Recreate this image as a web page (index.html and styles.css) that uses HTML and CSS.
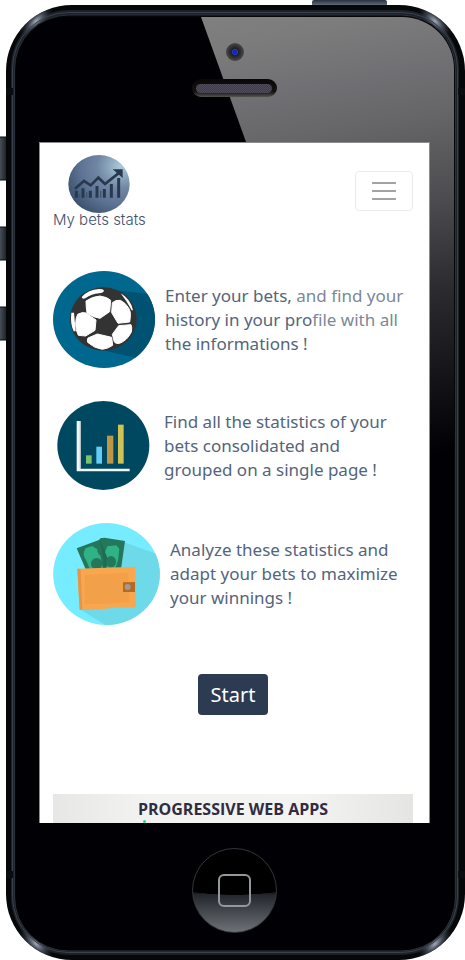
FILE: index.html
```html
<!DOCTYPE html>
<html lang="en">
<head>
<meta charset="utf-8">
<meta name="viewport" content="width=device-width, initial-scale=1">
<title>My bets stats</title>
<link rel="stylesheet" href="styles.css">
</head>
<body>
<div class="phone">
  <svg class="phone-shell" viewBox="0 0 465 960" preserveAspectRatio="none" aria-hidden="true">
    <defs>
      <linearGradient id="side" x1="0" x2="1" y1="0" y2="0"><stop offset="0" stop-color="#59616c"/><stop offset="1" stop-color="#14181e"/></linearGradient>
      <linearGradient id="power" x1="0" x2="0" y1="0" y2="1"><stop offset="0" stop-color="#28303b"/><stop offset=".5" stop-color="#5b6573"/><stop offset="1" stop-color="#10141a"/></linearGradient>
      <linearGradient id="glare" gradientUnits="userSpaceOnUse" x1="260" y1="0" x2="350" y2="470"><stop offset="0" stop-color="#808080"/><stop offset=".08" stop-color="#7c7c7c"/><stop offset=".2" stop-color="#707074"/><stop offset=".3" stop-color="#666668"/><stop offset=".48" stop-color="#4c4c50"/><stop offset=".66" stop-color="#2c2c30"/><stop offset=".88" stop-color="#101014"/><stop offset="1" stop-color="#010105"/></linearGradient>
      <radialGradient id="shine"><stop offset="0" stop-color="#a4acbb"/><stop offset=".4" stop-color="#596170" stop-opacity=".8"/><stop offset="1" stop-color="#20242c" stop-opacity="0"/></radialGradient>
      <radialGradient id="lens"><stop offset="0" stop-color="#1b2bd0"/><stop offset=".28" stop-color="#101a70"/><stop offset=".42" stop-color="#222226"/><stop offset="1" stop-color="#48484b"/></radialGradient>
      <linearGradient id="slot" x1="0" x2="0" y1="0" y2="1"><stop offset="0" stop-color="#080808"/><stop offset=".7" stop-color="#17130f"/><stop offset="1" stop-color="#56524f"/></linearGradient>
      <pattern id="mesh" width="2" height="2" patternUnits="userSpaceOnUse"><rect width="2" height="2" fill="#3d3b49"/><rect width="1" height="1" fill="#504e5c"/><rect x="1" y="1" width="1" height="1" fill="#504e5c"/></pattern>
      <clipPath id="glass"><rect x="16" y="17" width="438" height="933" rx="52"/></clipPath>
      <clipPath id="body"><rect x="6" y="5" width="459" height="955" rx="66"/></clipPath>
    </defs>
    <rect x="312" y="0" width="75" height="9" rx="2" fill="url(#power)"/>
    <g fill="url(#side)" stroke="#07090c">
      <rect x="-3" y="137" width="11" height="43" rx="2"/>
      <rect x="-3" y="227" width="11" height="33" rx="2"/>
      <rect x="-3" y="307" width="11" height="33" rx="2"/>
    </g>
    <rect x="6" y="5" width="459" height="955" rx="66" fill="#050708"/>
    <rect x="11" y="10" width="448" height="945" rx="58" fill="#1c2128"/>
    <g clip-path="url(#body)" fill="url(#shine)">
      <ellipse cx="36" cy="21" rx="22" ry="9" transform="rotate(-42 36 21)"/>
      <ellipse cx="435" cy="21" rx="22" ry="9" transform="rotate(42 435 21)"/>
      <ellipse cx="36" cy="944" rx="22" ry="9" transform="rotate(42 36 944)"/>
      <ellipse cx="435" cy="944" rx="22" ry="9" transform="rotate(-42 435 944)"/>
    </g>
    <rect x="12.500" y="12.500" width="445" height="940" rx="56" fill="none" stroke="#3b424d"/>
    <rect x="14.500" y="15" width="441" height="936" rx="54" fill="#050608" stroke="#2c323b"/>
    <rect x="16" y="17" width="438" height="933" rx="52" fill="#010105"/>
    <g clip-path="url(#glass)"><path d="M201 17H455V722Z" fill="url(#glare)"/></g>
    <path d="M6 88h7v7H6zM458 88h7v7h-7zM6 871h7v7H6zM458 871h7v7h-7z" fill="#0a0c10"/>
    <circle cx="235" cy="52" r="9" fill="url(#lens)"/>
    <circle cx="235" cy="52" r="2.500" fill="none" stroke="#2840e0"/>
    <rect x="192" y="79" width="85" height="18" rx="9" fill="url(#slot)"/>
    <rect x="196" y="84" width="76" height="9" rx="4.500" fill="url(#mesh)"/>
  </svg>

  <main class="screen">
    <header class="topbar">
      <a class="brand" href="#">
        <svg width="62" height="58" viewBox="84 43 186 174" aria-hidden="true">
          <defs><radialGradient id="orb" cx=".85" cy=".2" r=".95"><stop offset="0" stop-color="#a9cbd8"/><stop offset=".4" stop-color="#7186a3"/><stop offset=".7" stop-color="#5c7293"/><stop offset="1" stop-color="#3c526e"/></radialGradient></defs>
          <ellipse cx="177" cy="130" rx="92" ry="87" fill="url(#orb)"/>
          <path d="M105 144l27-23 20 13 23-23 20 19 43-34" fill="none" stroke="#28384f" stroke-width="8"/>
          <path d="M218 86h30v26z" fill="#28384f"/>
          <path d="M109 150v21M129 143v28M151 150v21M171 136v35M193 145v26M214 130v41M236 112v59" stroke="#28384f" stroke-width="9"/>
          <path d="M118 160v11M140 155v16M182 150v21" stroke="#40546f" stroke-width="4"/>
        </svg>
        <span class="brand-name">My bets stats</span>
      </a>
      <button class="toggler" type="button" aria-label="Toggle navigation">
        <svg width="26" height="20" viewBox="0 0 26 20" aria-hidden="true"><path d="M1 2h24M1 10h24M1 18h24" stroke="#a3a3a3" stroke-width="2"/></svg>
      </button>
    </header>

    <section class="features">
      <div class="feature">
        <svg width="102" height="97" viewBox="39 31 306 291" aria-hidden="true">
          <defs><clipPath id="c1"><ellipse cx="192" cy="176.500" rx="153" ry="145.500"/></clipPath></defs>
          <ellipse cx="192" cy="176.500" rx="153" ry="145.500" fill="#00678f"/>
          <path d="M215 88l135 14v192H300L195 270z" fill="#005273" clip-path="url(#c1)"/>
          <ellipse cx="190" cy="175" rx="100" ry="95" fill="#333"/>
          <g fill="#fff" stroke="#fff" stroke-width="3" stroke-linejoin="round">
            <path d="M138 121q18-13 42-15 22 3 32 13l-3 34-29 20q-19-2-39-16-3-18-3-36z"/>
            <path d="M217 126q10-9 24-7 24 13 30 36 1 15-2 29l-35 4-19-32z"/>
            <path d="M113 161q14-8 25-4l30 21-3 31-28 17-22-2q-8-16-8-33 0-19 6-30z"/>
            <path d="M236 195l37-3q4 9 1 22-12 25-35 34-12 2-16-4l-6-23z"/>
            <path d="M144 232l28-12 43 10 3 24q-14 10-31 12-24-3-44-21-2-7 1-13z"/>
          </g>
          <g fill="#fff">
            <path d="M125 109q20-22 52-24 14-1 15 6-2 5-15 7-22 2-41 15-9 4-11-4z"/>
            <path d="M94 156h8l5 56h-6q-11-23-7-56z"/>
            <path d="M242 98q30 17 37 51h-4q-16-30-33-51z"/>
          </g>
        </svg>
        <p class="feature-text">Enter your bets, <span class="soft">and find your</span> history in your pro<span class="soft">file with all</span> the informations !</p>
      </div>
      <div class="feature">
        <svg width="101" height="89" viewBox="39 32 303 267" aria-hidden="true">
          <ellipse cx="190" cy="165.500" rx="138" ry="133.500" fill="#00485f"/>
          <path d="M110 92h12v143h147v8H110z" fill="#f4f7f8"/>
          <path d="M119 92h3v143h-3z" fill="#b6c7cc"/>
          <path d="M138 195h17v25h-17z" fill="#78c46c"/>
          <path d="M169 169h17v51h-17z" fill="#65cdf5"/>
          <path d="M201 136h19v84h-19z" fill="#bf9645"/>
          <path d="M234 103h17v117h-17z" fill="#d1c254"/>
        </svg>
        <p class="feature-text">Find all the statistics of your bets consolidated and grouped on a single page !</p>
      </div>
      <div class="feature">
        <svg width="107" height="102" viewBox="39 39 321 306" aria-hidden="true">
          <defs><clipPath id="c3"><ellipse cx="199.500" cy="192" rx="160" ry="153"/></clipPath></defs>
          <ellipse cx="199.500" cy="192" rx="160" ry="153" fill="#75ecff"/>
          <path d="M253 97l110 40v210H200l-78-48z" fill="#6ed9e8" clip-path="url(#c3)"/>
          <path d="M110 115l67-25 4-5 12-2 62 10-12 85-105 2z" fill="#24775a"/>
          <path d="M132 124q5-3 4-9l21-7q7 6 15 9-2 10 9 20l9 41h-41q-6-18-12-30-8-9-5-24z" fill="#2fb286"/>
          <path d="M202 109l27-3q6 8 9 10l-3 31-9 31h-31l-2-36q1-19 9-33z" fill="#2fb286"/>
          <path d="M179 89l12 60-3 29h10l7-29z" fill="#1f6c50"/>
          <ellipse cx="170" cy="161" rx="17" ry="17" fill="#24775a"/>
          <ellipse cx="213" cy="155" rx="15" ry="17" fill="#24775a"/>
          <path d="M112 176l173-6 2 122-65 1-50 6-53 1z" fill="#f9a64f"/>
          <path d="M112 176l10 1 5 122-8 1z" fill="#e69546"/>
          <path d="M134 194l131-5 3 87-68 5-66 2z" fill="#f3a04a"/>
          <path d="M249 217l36-1v30h-36z" fill="#b9691f"/>
          <circle cx="263" cy="231" r="9" fill="#999ba0"/>
        </svg>
        <p class="feature-text">Analyze these statistics and adapt your bets to maximize your winnings !</p>
      </div>
    </section>

    <button class="start" type="button">Start</button>

    <section class="banner">
      <h2>PROGRESSIVE WEB APPS</h2>
      <span class="banner-dot"></span>
    </section>
  </main>

  <footer class="chin">
    <button class="home" type="button" aria-label="Home"><span class="home-mark"></span></button>
  </footer>
</div>
</body>
</html>
```
FILE: styles.css
```css
* { box-sizing: border-box; }

body {
  margin: 0;
  background: #fff;
  font-family: "Noto Sans", "Open Sans", sans-serif;
}

.phone {
  position: relative;
  display: flex;
  flex-direction: column;
  min-height: 100vh;
  padding: 142px 35px 0 39px;
  overflow: hidden;
}

.phone-shell {
  position: absolute;
  inset: 0;
  width: 100%;
  height: 100%;
}

.screen {
  position: relative;
  flex: 1;
  display: flex;
  flex-direction: column;
  padding: 12px 16px 0 13px;
  background: #fff;
  border: 1px solid #8c8c8c;
  border-width: 1px 1px 0;
}

.topbar {
  display: flex;
  justify-content: space-between;
  align-items: center;
  margin-bottom: 44px;
}

.brand {
  display: flex;
  flex-direction: column;
  align-items: center;
  color: #42526a;
  text-decoration: none;
}

.brand svg { display: block; }

.brand-name {
  font: 300 15px/14px Inter, sans-serif;
  white-space: nowrap;
}

.toggler {
  display: flex;
  align-items: center;
  justify-content: center;
  width: 58px;
  height: 40px;
  padding: 0;
  background: #fff;
  border: 1px solid #ebebeb;
  border-radius: 4px;
}

.features {
  display: flex;
  flex-direction: column;
  gap: 33px;
}

.feature {
  display: flex;
  align-items: center;
  gap: 10px;
}

.feature svg { flex: none; }

.feature-text {
  margin: 0;
  padding-right: 4px;
  color: #53657b;
  font-size: 17px;
  line-height: 24px;
}

.soft { color: #7b8896; }

.start {
  align-self: center;
  height: 41px;
  margin: 49px 0 79px;
  padding: 0 13px;
  background: #2c3b51;
  border: 0;
  border-radius: 4px;
  color: #fff;
  font: 20px/24px "Noto Sans", sans-serif;
}

.banner {
  flex: 1;
  padding: 4px 0 0;
  background: linear-gradient(90deg, #e7e7e5, #f2f2f0 25%, #f3f3f1 70%, #e5e5e3);
  text-align: center;
}

.banner h2 {
  margin: 0;
  color: #302c42;
  font: 700 16px/22px "Open Sans", sans-serif;
}

.banner-dot {
  display: block;
  width: 3px;
  height: 3px;
  margin-left: 25%;
  background: #2fd08a;
  border-radius: 50%;
}

.chin {
  position: relative;
  display: flex;
  justify-content: center;
  padding: 25px 0 27px;
}

.home {
  display: flex;
  align-items: center;
  justify-content: center;
  width: 85px;
  height: 85px;
  padding: 0;
  background: radial-gradient(ellipse 120px 46px at 50% 0, #000 99%, transparent 100%), linear-gradient(#000 50%, #23272c 55%, #6d7278);
  border: 1px solid #33363a;
  border-radius: 50%;
}

.home-mark {
  width: 33px;
  height: 33px;
  border: 2px solid #94979b;
  border-radius: 6px;
}
```
